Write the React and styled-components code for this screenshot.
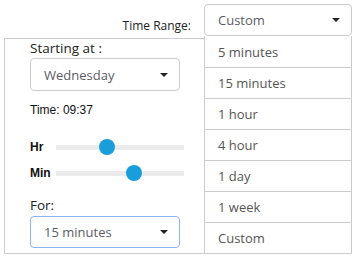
import React from 'react'
import styled, { createGlobalStyle } from 'styled-components'

const Global = createGlobalStyle`
  body {
    margin: 0;
    background: #fff;
    font-family: "Open Sans", "Noto Sans", sans-serif;
  }
`

const Page = styled.div`
  width: 358px;
  height: 259px;
  padding: 4px 6px 0 4px;
  box-sizing: border-box;
`

const TopRow = styled.div`
  display: flex;
  justify-content: flex-end;
  align-items: flex-start;
  gap: 13px;
  height: 34px;
`

const RangeLabel = styled.span`
  font-size: 12px;
  color: #222;
  padding-top: 13px;
`

const SelectWrap = styled.div`
  position: relative;
  flex: none;
  width: 148px;
`

const Select = styled.div`
  display: flex;
  align-items: center;
  justify-content: space-between;
  box-sizing: border-box;
  width: ${p => p.$width || 148}px;
  height: ${p => p.$height || 32}px;
  padding: 0 11px 0 13px;
  border: 1px solid ${p => (p.$focus ? '#8cb6f0' : '#ccc')};
  border-radius: 4px;
  font-size: 13px;
  color: #5c5c66;
  background: #fff;
`

const Caret = styled.span`
  width: 0;
  height: 0;
  border-left: 4px solid transparent;
  border-right: 4px solid transparent;
  border-top: 4px solid #222;
`

const Menu = styled.ul`
  position: absolute;
  top: 32px;
  left: 0;
  width: 148px;
  margin: 0;
  padding: 0;
  list-style: none;
  box-sizing: border-box;
  border: 1px solid #ccc;
  border-top: none;
  background: #fff;
  z-index: 2;
`

const MenuItem = styled.li`
  height: 31px;
  box-sizing: border-box;
  padding-left: 13px;
  display: flex;
  align-items: center;
  font-size: 13px;
  color: #555;
  border-top: 1px solid #ccc;
  &:first-child {
    border-top: none;
  }
`

const Panel = styled.div`
  height: 216px;
  border: 1px solid #ccc;
  box-sizing: border-box;
  padding: 0 0 0 25px;
  display: flex;
  flex-direction: column;
`

const FieldLabel = styled.div`
  font-size: 13.5px;
  line-height: 18px;
  color: #222;
  margin-top: ${p => p.$top || 0}px;
  margin-bottom: ${p => p.$gap || 0}px;
`

const TimeText = styled.div`
  font-family: "Liberation Sans", Arial, sans-serif;
  font-size: 12px;
  line-height: 14px;
  color: #111;
  margin-top: 12px;
`

const SliderRow = styled.div`
  display: flex;
  align-items: center;
  height: 16px;
  margin-top: ${p => p.$top}px;
`

const SliderLabel = styled.span`
  width: 26px;
  font-family: "Liberation Sans", Arial, sans-serif;
  font-weight: bold;
  font-size: 12px;
  color: #111;
`

const Track = styled.div`
  position: relative;
  width: 128px;
  height: 5px;
  background: #ebebeb;
`

const Thumb = styled.div`
  position: absolute;
  top: 50%;
  width: 16px;
  height: 16px;
  margin: -8px 0 0 -8px;
  border-radius: 50%;
  background: #1a9edb;
`

const Slider = ({ label, value, top }) => (
  <SliderRow $top={top}>
    <SliderLabel>{label}</SliderLabel>
    <Track>
      <Thumb style={{ left: `${value}%` }} />
    </Track>
  </SliderRow>
)

const options = ['5 minutes', '15 minutes', '1 hour', '4 hour', '1 day', '1 week', 'Custom']

export default function App() {
  return (
    <Page>
      <Global />
      <TopRow>
        <RangeLabel>Time Range:</RangeLabel>
        <SelectWrap>
          <Select>
            Custom
            <Caret />
          </Select>
          <Menu>
            {options.map(o => (
              <MenuItem key={o}>{o}</MenuItem>
            ))}
          </Menu>
        </SelectWrap>
      </TopRow>
      <Panel>
        <FieldLabel $gap={1}>Starting at :</FieldLabel>
        <Select $width={150} $height={33}>
          Wednesday
          <Caret />
        </Select>
        <TimeText>Time: 09:37</TimeText>
        <Slider label="Hr" value={40} top={22} />
        <Slider label="Min" value={61} top={10} />
        <FieldLabel $top={15} $gap={2}>For:</FieldLabel>
        <Select $width={150} $focus>
          15 minutes
          <Caret />
        </Select>
      </Panel>
    </Page>
  )
}
